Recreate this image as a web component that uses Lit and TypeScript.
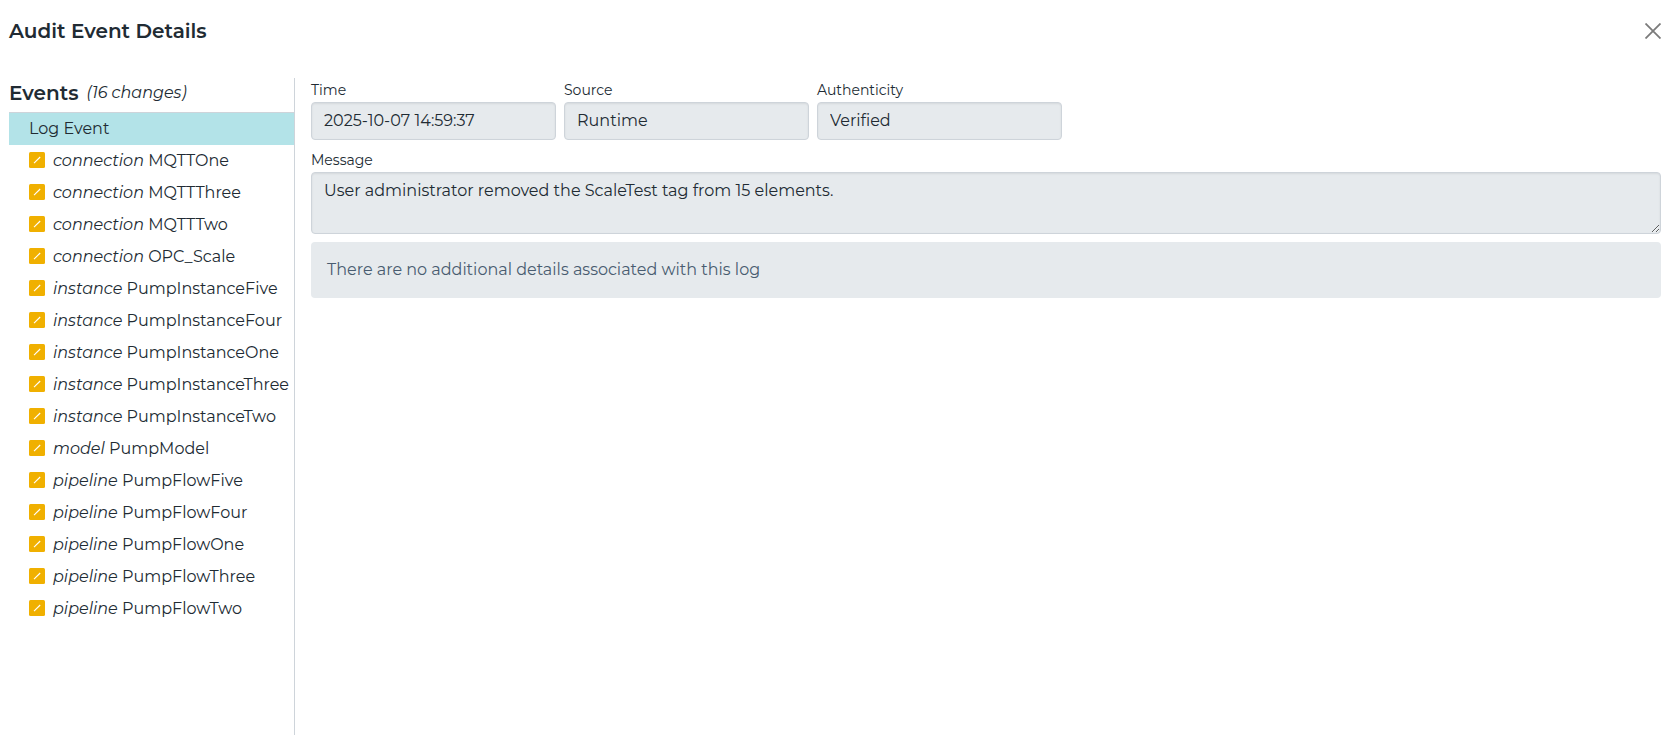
import { LitElement, html, css } from "lit";
import { customElement, property, state } from "lit/decorators.js";

interface Change {
  kind: string;
  name: string;
}

const changes: Change[] = [
  { kind: "connection", name: "MQTTOne" },
  { kind: "connection", name: "MQTTThree" },
  { kind: "connection", name: "MQTTTwo" },
  { kind: "connection", name: "OPC_Scale" },
  { kind: "instance", name: "PumpInstanceFive" },
  { kind: "instance", name: "PumpInstanceFour" },
  { kind: "instance", name: "PumpInstanceOne" },
  { kind: "instance", name: "PumpInstanceThree" },
  { kind: "instance", name: "PumpInstanceTwo" },
  { kind: "model", name: "PumpModel" },
  { kind: "pipeline", name: "PumpFlowFive" },
  { kind: "pipeline", name: "PumpFlowFour" },
  { kind: "pipeline", name: "PumpFlowOne" },
  { kind: "pipeline", name: "PumpFlowThree" },
  { kind: "pipeline", name: "PumpFlowTwo" },
];

@customElement("event-list")
export class EventList extends LitElement {
  @property({ attribute: false }) items: Change[] = [];
  @state() private selected = 0;

  static styles = css`
    :host {
      display: block;
      box-sizing: border-box;
      border-right: 1px solid #ced4da;
    }
    .head {
      display: flex;
      align-items: center;
      gap: 8px;
      height: 34px;
      box-sizing: border-box;
      padding-bottom: 4px;
    }
    .title {
      margin: 0;
      font-size: 20px;
      line-height: 24px;
      font-weight: 600;
    }
    .count {
      font-style: italic;
    }
    .list {
      list-style: none;
      margin: 0;
      padding: 0;
    }
    .row {
      display: flex;
      align-items: center;
      gap: 8px;
      width: 100%;
      height: 32px;
      padding: 0 0 0 20px;
      border: 0;
      background: none;
      color: inherit;
      font: inherit;
      text-align: left;
      white-space: nowrap;
      cursor: pointer;
    }
    .log {
      border-top: 1px solid transparent;
      height: 33px;
    }
    .selected {
      background: #b3e3e8;
      border-top-color: #ced4da;
    }
    .badge {
      flex: none;
      width: 16px;
      height: 16px;
      margin-bottom: 2px;
    }
  `;

  private row(index: number, content: unknown) {
    const on = this.selected === index;
    return html`<li>
      <button
        type="button"
        class="row ${index === 0 ? "log" : ""} ${on ? "selected" : ""}"
        aria-current=${on ? "true" : "false"}
        @click=${() => (this.selected = index)}
      >
        ${content}
      </button>
    </li>`;
  }

  render() {
    return html`
      <div class="head">
        <h2 class="title">Events</h2>
        <span class="count">(${this.items.length + 1} changes)</span>
      </div>
      <ul class="list">
        ${this.row(0, "Log Event")}
        ${this.items.map((item, i) =>
          this.row(
            i + 1,
            html`<svg class="badge" viewBox="0 0 16 16" aria-hidden="true">
                <rect width="16" height="16" rx="1.5" fill="#f0b000" />
                <path d="M5 11.2 11.2 5" stroke="#fff" stroke-width="1.1" fill="none" />
              </svg>
              <span><em>${item.kind}</em> ${item.name}</span>`
          )
        )}
      </ul>
    `;
  }
}

@customElement("log-details")
export class LogDetails extends LitElement {
  static styles = css`
    :host {
      display: flex;
      flex-direction: column;
      gap: 8px;
    }
    .fields {
      display: flex;
      gap: 8px;
    }
    .field {
      display: flex;
      flex-direction: column;
    }
    .short {
      flex: 0 1 245px;
      min-width: 0;
    }
    .label {
      font-size: 14px;
      line-height: 24px;
    }
    .control {
      box-sizing: border-box;
      width: 100%;
      margin: 0;
      padding: 6px 12px;
      border: 1px solid #ced4da;
      border-radius: 4px;
      background: #e6eaed;
      box-shadow: inset 0 1px 2px rgba(0, 0, 0, 0.075);
      color: inherit;
      font: inherit;
      line-height: 24px;
      outline: none;
    }
    .line {
      height: 38px;
      padding-top: 5px;
      padding-bottom: 7px;
    }
    .area {
      display: block;
      resize: vertical;
    }
    .note {
      margin: 0;
      padding: 16px;
      border-radius: 4px;
      background: #e6eaed;
      color: #495c70;
    }
  `;

  render() {
    return html`
      <div class="fields">
        <div class="field short">
          <label class="label" for="time">Time</label>
          <input class="control line" id="time" readonly value="2025-10-07 14:59:37" />
        </div>
        <div class="field short">
          <label class="label" for="source">Source</label>
          <input class="control line" id="source" readonly value="Runtime" />
        </div>
        <div class="field short">
          <label class="label" for="authenticity">Authenticity</label>
          <input class="control line" id="authenticity" readonly value="Verified" />
        </div>
      </div>
      <div class="field">
        <label class="label" for="message">Message</label>
        <textarea
          class="control area"
          id="message"
          rows="2"
          readonly
          .value=${"User administrator removed the ScaleTest tag from 15 elements."}
        ></textarea>
      </div>
      <p class="note">There are no additional details associated with this log</p>
    `;
  }
}

@customElement("app-root")
export class AppRoot extends LitElement {
  static styles = css`
    :host {
      display: flex;
      flex-direction: column;
      box-sizing: border-box;
      min-height: 100vh;
      padding: 0 15px 0 9px;
      background: #fff;
      color: #212b33;
      font-family: Montserrat, Inter, "Open Sans", sans-serif;
      font-size: 16px;
      line-height: 24px;
    }
    .header {
      display: flex;
      align-items: center;
      justify-content: space-between;
      height: 62px;
      margin-bottom: 16px;
    }
    .title {
      margin: 0;
      font-size: 20px;
      line-height: 24px;
      font-weight: 600;
    }
    .close {
      display: block;
      padding: 0;
      border: 0;
      background: none;
      cursor: pointer;
    }
    .cross {
      display: block;
      width: 16px;
      height: 16px;
    }
    .body {
      flex: 1;
      display: flex;
      gap: 16px;
    }
    .events {
      flex: none;
      width: 286px;
    }
    .details {
      flex: 1;
      min-width: 0;
    }
  `;

  render() {
    return html`
      <header class="header">
        <h1 class="title">Audit Event Details</h1>
        <button class="close" type="button" aria-label="Close">
          <svg class="cross" viewBox="0 0 16 16" aria-hidden="true">
            <path d="M.5.5l15 15M15.5.5l-15 15" stroke="#7b7b7b" stroke-width="1.8" fill="none" />
          </svg>
        </button>
      </header>
      <main class="body">
        <event-list class="events" .items=${changes}></event-list>
        <log-details class="details"></log-details>
      </main>
    `;
  }
}
